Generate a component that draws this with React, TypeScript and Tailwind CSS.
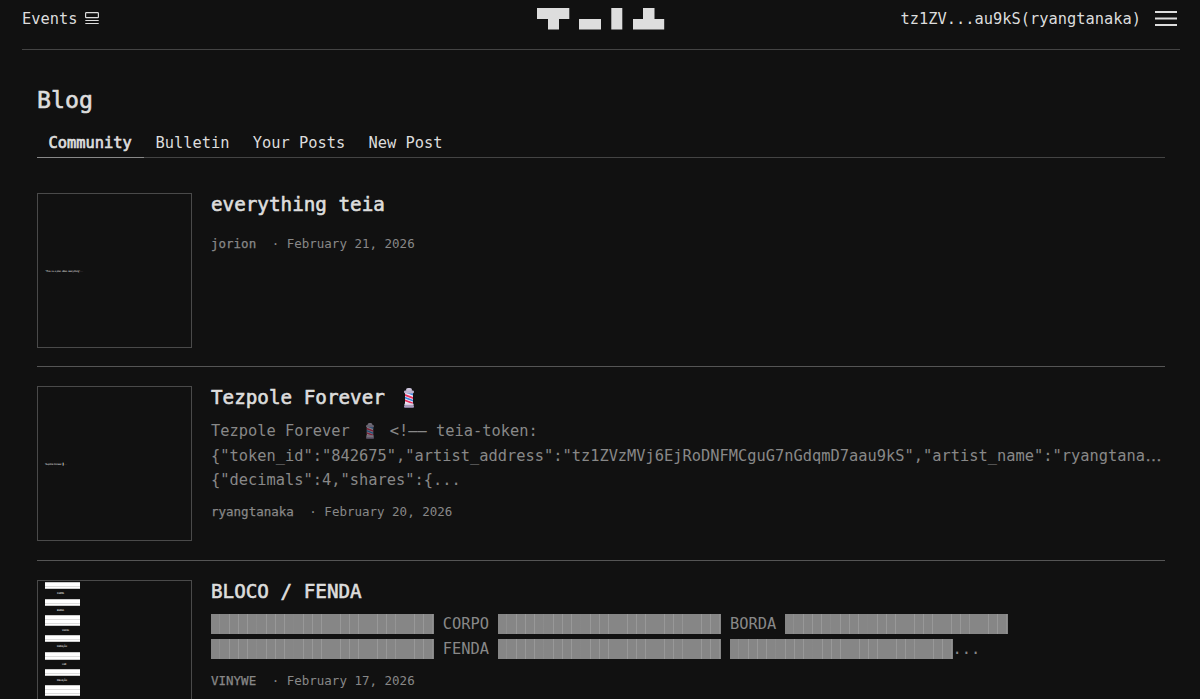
import type { ReactNode } from 'react';

const BLOCKS = '█'.repeat(24);

function Pole({ className }: { className: string }) {
  return (
    <svg viewBox="0 0 12 20" className={className} aria-label="barber pole">
      <rect x="2" y="4" width="8" height="12" fill="#eeeaf8" />
      <path d="M2 6l8 3v2L2 8zM2 11.5l8 3v1.8l-8-3z" fill="#e8305f" />
      <path d="M2 8.8l8 3v1.8l-8-3zM5 5h5v2.6L3.5 5z" fill="#3b86dc" />
      <rect x="3" y="0" width="6" height="4" rx="2" fill="#cdc4dc" />
      <rect x="1" y="2.4" width="10" height="3" rx="1.4" fill="#bdb2ce" />
      <rect x="1.4" y="15.4" width="9.2" height="2.4" rx="0.6" fill="#d6cde4" />
      <rect x="1" y="17.4" width="10" height="2.4" rx="1" fill="#a99abf" />
    </svg>
  );
}

function Bar() {
  return (
    <span className="relative -mt-0.5 block h-5 w-[222.6px] overflow-hidden bg-[#868686] leading-5 text-[#868686] after:absolute after:inset-0 after:bg-[repeating-linear-gradient(90deg,transparent_0px,transparent_8.4px,#989898_8.6px,#989898_9.26px)]">
      {BLOCKS}
    </span>
  );
}

function Row({ thumb, title, children, author, date }: { thumb: ReactNode; title: ReactNode; children?: ReactNode; author: string; date: string }) {
  return (
    <article className="flex h-[193.6px] shrink-0 gap-5 border-b border-[#555] pt-[19.3px]">
      <div className="h-[155px] w-[155px] shrink-0 overflow-hidden border border-[#4a4a4a]">{thumb}</div>
      <div className="-ml-px min-w-0 flex-1 pt-[1.5px]">
        <h2 className="flex h-[22px] items-center text-[19.25px] whitespace-pre [-webkit-text-stroke:0.6px]">{title}</h2>
        {children ? <div className="mt-[9px] mb-[9.2px] text-[15.37px] leading-[24.8px] whitespace-pre text-[#888]">{children}</div> : <div className="h-[18px]" />}
        <p className="flex h-5 items-center text-[12.5px] whitespace-pre text-[#888]">
          <span className="[-webkit-text-stroke:0.25px]">{author}</span>
          <span className="ml-[15.5px]">· {date}</span>
        </p>
      </div>
    </article>
  );
}

const STRIPES = [
  { h: 'h-[7px]', label: 'FORMA', pad: 'pl-3' },
  { h: 'h-[7px]', label: 'BORDA', pad: 'pl-3' },
  { h: 'h-[11px]', label: 'VAZIO', pad: 'pl-[17px]' },
  { h: 'h-[7px]', label: 'DURAÇÃO', pad: 'pl-3' },
  { h: 'h-[8px]', label: 'COR', pad: 'pl-[17px]' },
  { h: 'h-[7px]', label: 'RELAÇÃO', pad: 'pl-3' },
  { h: 'h-[11px]', label: '', pad: 'pl-[17px]' },
];

export default function App() {
  return (
    <div className="flex h-[699px] flex-col overflow-hidden bg-[#111] font-['DejaVu_Sans_Mono',monospace] text-[15.36px] text-[#ddd]">
      <header className="mr-5 ml-[22px] flex h-[50px] shrink-0 justify-between border-b border-[#444]">
        <div className="flex h-[38px] flex-1 items-center gap-[8px]">
          <span className="pt-px">Events</span>
          <svg className="-mt-0.5" width="14" height="13" viewBox="0 0 14 13" fill="none" stroke="currentColor">
            <rect x="0.6" y="0.7" width="12.8" height="5" rx="0.8" strokeWidth="1.2" />
            <path d="M0.3 8.5h13.4M0.3 11.5h13.4" strokeWidth="1.2" />
          </svg>
        </div>
        <svg className="mt-2 translate-x-px" width="128" height="22" viewBox="0 0 128 22" fill="#ddd">
          <path d="M0 0h32.3v11H22v10.5H11V11H0zM42 11h22v10.5H42zM74.3 0h11v21.5h-11zM96 11h10V0h11.5v11h9.7v10.5H96z" />
        </svg>
        <div className="flex h-[38px] flex-1 items-center justify-end gap-[14px] pr-[3px]">
          <span className="pt-px">tz1ZV...au9kS(ryangtanaka)</span>
          <svg className="-mt-0.5" width="22" height="15" viewBox="0 0 22 15" stroke="#ddd" strokeWidth="2">
            <path d="M0 1h22M0 7.5h22M0 14h22" />
          </svg>
        </div>
      </header>

      <main className="mr-[35px] ml-[37px] flex flex-col">
        <h1 className="mt-[34px] h-8 text-[23.2px] leading-8 [-webkit-text-stroke:0.6px]">Blog</h1>
        <nav className="mt-[13px] flex h-[29px] border-b border-[#444]">
          <a className="h-[29px] w-[107px] border-b border-[#888] pl-[11.5px] leading-[29px] [-webkit-text-stroke:0.7px]">Community</a>
          <a className="pl-[11.5px] leading-[29px]">Bulletin</a>
          <a className="pl-[23.3px] leading-[29px]">Your Posts</a>
          <a className="pl-[23.3px] leading-[29px]">New Post</a>
        </nav>
        <div className="mt-[15.5px] flex flex-col">
          <Row
            title="everything teia"
            author="jorion"
            date="February 21, 2026"
            thumb={<p className="mt-[75px] ml-[7px] text-[2.5px] leading-[5px] tracking-[-0.45px] whitespace-nowrap">"This is a post about everything"...</p>}
          />
          <Row
            title={<>Tezpole Forever<Pole className="-mt-0.5 ml-[18px] h-5 w-3" /></>}
            author="ryangtanaka"
            date="February 20, 2026"
            thumb={<p className="mt-[75px] ml-[7px] text-[2.5px] leading-[5px] tracking-[-0.4px] whitespace-pre">Tezpole Forever ▌...</p>}
          >
            <div className="flex items-center">
              Tezpole Forever<Pole className="mr-[15px] ml-[15px] h-4 w-[10px] opacity-50" />{'<!—— teia-token:'}
            </div>
            <div>
              {'{"token_id":"842675","artist_address":"tz1ZVzMVj6EjRoDNFMCguG7nGdqmD7aau9kS","artist_name":"ryangtana'}
              <span className="font-['Liberation_Sans',sans-serif] text-[17px] leading-none [-webkit-text-stroke:0.3px]">…</span>
            </div>
            <div>{'{"decimals":4,"shares":{...'}</div>
          </Row>
          <Row
            title="BLOCO / FENDA"
            author="VINYWE"
            date="February 17, 2026"
            thumb={
              <div className="ml-[7px] w-[35px]">
                <div className="h-[1.5px]" />
                {STRIPES.map((s, i) => (
                  <div key={i}>
                    <div className={`${s.h} border-y border-[#ccc] bg-[repeating-linear-gradient(180deg,#fff_0px,#fff_3px,#ddd_3px,#ddd_4px)]`} />
                    <p className={`${s.pad} h-[9.3px] text-[2.5px] leading-[9px] tracking-[-0.1px] text-white`}>{s.label}</p>
                  </div>
                ))}
              </div>
            }
          >
            <div className="flex h-[24.8px] items-center gap-[9.2px]"><Bar />CORPO<Bar />BORDA<Bar /></div>
            <div className="flex h-[24.8px] items-center gap-[9.2px]"><Bar />FENDA<Bar /><span className="flex items-center"><Bar />...</span></div>
          </Row>
        </div>
      </main>
    </div>
  );
}
